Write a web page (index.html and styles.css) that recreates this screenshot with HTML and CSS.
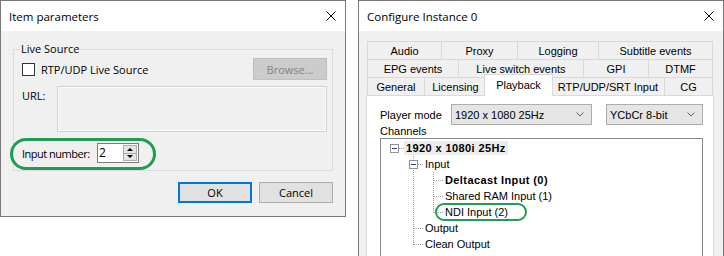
FILE: index.html
```html
<!DOCTYPE html>
<html lang="en">
<head>
  <meta charset="UTF-8" />
  <meta name="viewport" content="width=device-width, initial-scale=1" />
  <title>Item parameters - Configure Instance</title>
  <link rel="stylesheet" href="styles.css">
</head>
<body>
  <div class="desk">

    <!-- Left dialog: item parameters -->
    <section class="dialog dialog-item" aria-label="Item parameters">
      <header class="titlebar">
        <span class="title">Item parameters</span>
        <svg class="close" viewBox="0 0 10 10" aria-hidden="true"><path d="M0.5 0.5L9.5 9.5M9.5 0.5L0.5 9.5" /></svg>
      </header>
      <div class="dialog-body">
        <fieldset class="group">
          <legend>Live Source</legend>
          <div class="source-row">
            <label class="check"><span class="check-box"></span>RTP/UDP Live Source</label>
            <button class="btn" disabled>Browse...</button>
          </div>
          <div class="url-row">
            <span class="url-label">URL:</span>
            <div class="url-box"></div>
          </div>
          <div class="input-row">
            <span class="input-label">Input number:</span>
            <div class="spin">
              <span class="spin-value">2</span>
              <span class="spin-buttons">
                <span class="spin-btn spin-up"></span>
                <span class="spin-btn spin-down"></span>
              </span>
            </div>
            <span class="callout callout-input"></span>
          </div>
        </fieldset>
        <div class="actions">
          <button class="btn btn-default">OK</button>
          <button class="btn">Cancel</button>
        </div>
      </div>
    </section>

    <!-- Right dialog: configure instance (cut off at the bottom) -->
    <section class="dialog dialog-config" aria-label="Configure Instance 0">
      <header class="titlebar">
        <span class="title">Configure Instance 0</span>
        <svg class="close" viewBox="0 0 10 10" aria-hidden="true"><path d="M0.5 0.5L9.5 9.5M9.5 0.5L0.5 9.5" /></svg>
      </header>
      <div class="dialog-body">
        <div class="tab-row tab-row-1">
          <span class="tab">Audio</span>
          <span class="tab">Proxy</span>
          <span class="tab">Logging</span>
          <span class="tab">Subtitle events</span>
        </div>
        <div class="tab-row tab-row-2">
          <span class="tab">EPG events</span>
          <span class="tab">Live switch events</span>
          <span class="tab">GPI</span>
          <span class="tab">DTMF</span>
        </div>
        <div class="tab-row tab-row-3">
          <span class="tab">General</span>
          <span class="tab">Licensing</span>
          <span class="tab tab-active">Playback</span>
          <span class="tab">RTP/UDP/SRT Input</span>
          <span class="tab">CG</span>
        </div>

        <div class="tab-panel">
          <div class="mode-row">
            <span class="mode-label">Player mode</span>
            <div class="combo combo-mode">
              <span>1920 x 1080 25Hz</span>
              <svg class="chevron" viewBox="0 0 8 5" aria-hidden="true"><path d="M0.5 0.5L4 4L7.5 0.5" /></svg>
            </div>
            <div class="combo combo-color">
              <span>YCbCr 8-bit</span>
              <svg class="chevron" viewBox="0 0 8 5" aria-hidden="true"><path d="M0.5 0.5L4 4L7.5 0.5" /></svg>
            </div>
          </div>
          <div class="channels-label">Channels</div>

          <div class="tree">
            <div class="node">
              <span class="cell root"><span class="toggle"></span></span>
              <span class="node-text bold selected">1920 x 1080i 25Hz</span>
            </div>
            <div class="node">
              <span class="cell"></span>
              <span class="cell tee"><span class="toggle"></span></span>
              <span class="node-text">Input</span>
            </div>
            <div class="node">
              <span class="cell"></span>
              <span class="cell pipe"></span>
              <span class="cell tee wide"></span>
              <span class="node-text bold">Deltacast Input (0)</span>
            </div>
            <div class="node">
              <span class="cell"></span>
              <span class="cell pipe"></span>
              <span class="cell tee wide"></span>
              <span class="node-text">Shared RAM Input (1)</span>
            </div>
            <div class="node">
              <span class="cell"></span>
              <span class="cell pipe"></span>
              <span class="cell elbow wide"></span>
              <span class="node-text">NDI Input (2)</span>
              <span class="callout callout-ndi"></span>
            </div>
            <div class="node">
              <span class="cell"></span>
              <span class="cell tee"></span>
              <span class="node-text">Output</span>
            </div>
            <div class="node">
              <span class="cell"></span>
              <span class="cell elbow"></span>
              <span class="node-text">Clean Output</span>
            </div>
          </div>
        </div>
      </div>
    </section>

  </div>
</body>
</html>
```

FILE: styles.css
```css
/* Reset and base */
*, *::before, *::after {
  box-sizing: border-box;
}
html, body {
  margin: 0; padding: 0;
  height: 256px;
  overflow: hidden;
  background-color: #fff;
}
body {
  font-family: "Liberation Sans", Arial, sans-serif;
  font-size: 11px;
  color: #000;
}

.desk {
  display: flex;
  align-items: flex-start;
  gap: 12px;
}

/* Dialog frame */
.dialog {
  flex: none;
  display: flex;
  flex-direction: column;
  border: 1px solid #787878;
  background-color: #f0f0f0;
}
.dialog-item {
  width: 346px;
  height: 217px;
}
.dialog-config {
  width: 366px;
  height: 256px;
  border-bottom: none;
}
.titlebar {
  flex: none;
  height: 30px;
  display: flex;
  align-items: center;
  justify-content: space-between;
  padding: 0 9px 0 8px;
  background-color: #fff;
  font-family: "Open Sans", "Noto Sans", sans-serif;
  font-size: 11.5px;
}
.titlebar .close {
  width: 10px;
  height: 10px;
  stroke: #000;
  stroke-width: 1;
  fill: none;
}
.dialog-body {
  flex: 1;
  min-height: 0;
}

/* Item parameters */
.dialog-item .dialog-body {
  padding: 0 12px;
  font-family: "Open Sans", "Noto Sans", sans-serif;
  font-size: 11px;
}
.group {
  margin: 11px 0 0;
  padding: 0 5px 7px 8px;
  border: 1px solid #dcdcdc;
  min-width: 0;
}
.group legend {
  padding: 0 1px;
  margin-left: -2px;
  line-height: 14px;
}
.source-row {
  display: flex;
  align-items: center;
  justify-content: space-between;
  margin-top: 2px;
}
.check {
  display: flex;
  align-items: center;
  gap: 6px;
}
.check-box {
  width: 13px;
  height: 13px;
  border: 1px solid #333;
  background-color: #fff;
}
.btn {
  width: 74px;
  height: 21px;
  padding: 0;
  border: 1px solid #adadad;
  background-color: #e1e1e1;
  color: #000;
  font: inherit;
}
.btn:disabled {
  height: 22px;
  border-color: #bfbfbf;
  background-color: #cccccc;
  color: #838383;
}
.btn-default {
  border: 2px solid #0078d7;
}
.url-row {
  display: flex;
  align-items: flex-start;
  margin-top: 6px;
}
.url-label {
  width: 35px;
  line-height: 14px;
  margin-top: 3px;
}
.url-box {
  width: 271px;
  height: 46px;
  border: 1px solid #d0d0d0;
  box-shadow: inset 0 0 0 1px #fafafa;
}
.input-row {
  position: relative;
  display: flex;
  align-items: center;
  margin-top: 11px;
}
.input-label {
  width: 75px;
  letter-spacing: -0.5px;
}
.spin {
  display: flex;
  width: 42px;
  height: 20px;
  border: 1px solid #7a7a7a;
  background-color: #fff;
}
.spin-value {
  flex: 1;
  padding-left: 1px;
  font-size: 12px;
  line-height: 18px;
}
.spin-buttons {
  display: flex;
  flex-direction: column;
  width: 15px;
  padding: 1px 1px 1px 0;
}
.spin-btn {
  flex: 1;
  display: flex;
  align-items: center;
  justify-content: center;
  border: 1px solid #adadad;
  background-color: #e5e5e5;
}
.spin-down {
  border-top: none;
}
.spin-btn::before {
  content: "";
  border-left: 3px solid transparent;
  border-right: 3px solid transparent;
}
.spin-up::before {
  border-bottom: 3px solid #000;
}
.spin-down::before {
  border-top: 3px solid #000;
}
.actions {
  display: flex;
  justify-content: flex-end;
  gap: 7px;
  margin-top: 11px;
}

/* Annotation ellipses */
.callout {
  position: absolute;
  border-style: solid;
  border-color: #1f9e52;
  border-radius: 999px;
  pointer-events: none;
}
.callout-input {
  left: -12px;
  top: -5px;
  width: 146px;
  height: 32px;
  border-width: 3px;
}
.callout-ndi {
  left: 50px;
  top: -1px;
  width: 92px;
  height: 18px;
  border-width: 2px;
}

/* Configure instance: tabs */
.dialog-config .dialog-body {
  display: flex;
  flex-direction: column;
  padding: 10px 9px 0 7px;
}
.tab-row {
  flex: none;
  display: grid;
  height: 18px;
  margin-left: 1px;
  width: 346px;
}
.tab-row-1 { grid-template-columns: 74px 76px 81px 115px; }
.tab-row-2 { grid-template-columns: 91px 125px 65px 65px; }
.tab-row-3 { grid-template-columns: 57px 62px 65px 113px 49px; }
.tab {
  display: flex;
  align-items: center;
  justify-content: center;
  border: 1px solid #d9d9d9;
  border-right: none;
  border-bottom: none;
  background-color: #f0f0f0;
  white-space: nowrap;
}
.tab:last-child {
  border-right: 1px solid #d9d9d9;
}
.tab-active {
  position: relative;
  z-index: 1;
  margin: -3px -2px -1px;
  padding-bottom: 2px;
  border-right: 1px solid #d9d9d9;
  background-color: #fff;
}
.tab-panel {
  flex: 1;
  display: flex;
  flex-direction: column;
  min-height: 0;
  padding: 8px 9px 0 13px;
  border: 1px solid #d9d9d9;
  border-bottom: none;
  background-color: #fff;
}
.mode-row {
  display: flex;
  align-items: center;
}
.mode-label {
  width: 71px;
}
.combo {
  display: flex;
  align-items: center;
  justify-content: space-between;
  height: 21px;
  padding: 0 7px 0 3px;
  border: 1px solid #adadad;
  background-color: #e5e5e5;
}
.combo-mode {
  width: 141px;
}
.combo-color {
  width: 97px;
  margin-left: 14px;
}
.combo .chevron {
  width: 8px;
  height: 5px;
  stroke: #606060;
  stroke-width: 1;
  fill: none;
}
.channels-label {
  line-height: 13px;
}

/* Tree view */
.tree {
  flex: 1;
  min-height: 0;
  width: 323px;
  padding: 1px 0 0 4px;
  border: 1px solid #828790;
  border-bottom: none;
  background-color: #fff;
}
.node {
  position: relative;
  display: flex;
  height: 16px;
  align-items: center;
}
.cell {
  position: relative;
  flex: none;
  width: 19px;
  height: 16px;
}
.cell.wide {
  width: 20px;
}
.cell.pipe::before,
.cell.tee::before,
.cell.elbow::before {
  content: "";
  position: absolute;
  left: 9px;
  top: 0;
  width: 1px;
  height: 16px;
  background: repeating-linear-gradient(to bottom, #a0a0a0 0 1px, transparent 1px 2px);
}
.cell.wide::before {
  left: 10px;
}
.cell.elbow::before {
  height: 9px;
}
.cell.root::after,
.cell.tee::after,
.cell.elbow::after {
  content: "";
  position: absolute;
  left: 10px;
  right: 0;
  top: 8px;
  height: 1px;
  background: repeating-linear-gradient(to right, #a0a0a0 0 1px, transparent 1px 2px);
}
.cell.wide::after {
  left: 11px;
}
.toggle {
  position: absolute;
  z-index: 1;
  left: 5px;
  top: 4px;
  width: 9px;
  height: 9px;
  border: 1px solid #919191;
  background-color: #fff;
}
.toggle::before {
  content: "";
  position: absolute;
  left: 1px;
  top: 3px;
  width: 5px;
  height: 1px;
  background-color: #1c3f94;
}
.node-text {
  padding: 0 2px;
  line-height: 14px;
  white-space: nowrap;
}
.node-text.bold {
  font-weight: bold;
  letter-spacing: 0.4px;
}
.node-text.selected {
  background-color: #ececec;
}
```
